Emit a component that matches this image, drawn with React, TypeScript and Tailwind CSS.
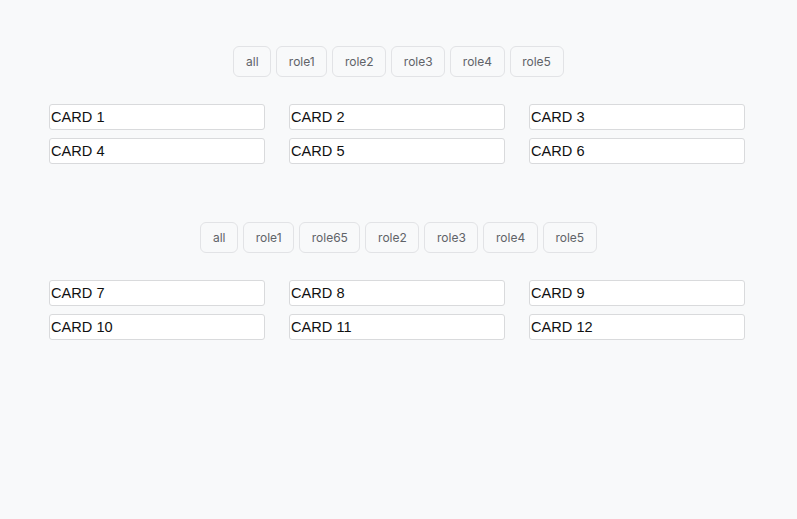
const sections = [
  {
    roles: ["all", "role1", "role2", "role3", "role4", "role5"],
    cards: ["CARD 1", "CARD 2", "CARD 3", "CARD 4", "CARD 5", "CARD 6"],
  },
  {
    roles: ["all", "role1", "role65", "role2", "role3", "role4", "role5"],
    cards: ["CARD 7", "CARD 8", "CARD 9", "CARD 10", "CARD 11", "CARD 12"],
  },
];

const RoleButton = ({ label }: { label: string }) => (
  <button className="h-[31px] px-[11.6px] rounded-md border border-[#e2e3e6] bg-[#f8f9fa] text-xs text-[#606368] font-['Inter',sans-serif]">
    {label}
  </button>
);

const Card = ({ title }: { title: string }) => (
  <div className="h-[26px] px-px rounded-[3px] border border-[#d9dadc] bg-white text-[14.6px] leading-6 text-[#111] font-['Liberation_Sans',Arial,sans-serif]">
    {title}
  </div>
);

export default function App() {
  return (
    <div className="min-h-[519px] bg-[#f8f9fa] pt-[46px] flex flex-col gap-[58px]">
      {sections.map((s, i) => (
        <section key={i} className="flex flex-col gap-[27px]">
          <div className="flex justify-center gap-[5px]">
            {s.roles.map((r) => (
              <RoleButton key={r} label={r} />
            ))}
          </div>
          <div className="w-[696px] ml-[49px] grid grid-cols-3 gap-x-6 gap-y-2">
            {s.cards.map((c) => (
              <Card key={c} title={c} />
            ))}
          </div>
        </section>
      ))}
    </div>
  );
}
